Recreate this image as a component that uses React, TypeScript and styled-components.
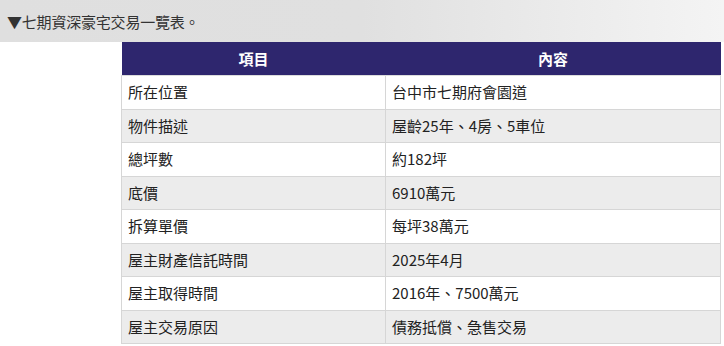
import React from "react"
import styled, { createGlobalStyle } from "styled-components"

const rows: Array<[string, string]> = [
  ["所在位置", "台中市七期府會園道"],
  ["物件描述", "屋齡25年、4房、5車位"],
  ["總坪數", "約182坪"],
  ["底價", "6910萬元"],
  ["拆算單價", "每坪38萬元"],
  ["屋主財產信託時間", "2025年4月"],
  ["屋主取得時間", "2016年、7500萬元"],
  ["屋主交易原因", "債務抵償、急售交易"],
]

const GlobalStyle = createGlobalStyle`
  body {
    margin: 0;
    background: #fff;
    font-family: "Noto Sans CJK TC", "Noto Sans", sans-serif;
    color: #222;
  }
`

const TitleBar = styled.div`
  height: 42px;
  display: flex;
  align-items: center;
  padding-left: 7px;
  background: linear-gradient(to right, #dfdfdf 0%, #e0e0e0 50%, #f4f4f4 100%);
  font-size: 15px;
  color: #333;
  letter-spacing: -0.2px;
`

const Table = styled.table`
  margin-left: 121px;
  width: 600px;
  border-collapse: collapse;
  table-layout: fixed;
  font-size: 15px;
`

const HeadCell = styled.th<{ $first?: boolean }>`
  width: ${(p) => (p.$first ? "264px" : "auto")};
  height: 33px;
  padding: 0;
  background: #2e266e;
  color: #fff;
  font-weight: 700;
  text-align: center;
  border-bottom: 1px solid #dcdcdc;
`

const Row = styled.tr<{ $alt: boolean }>`
  background: ${(p) => (p.$alt ? "#ececec" : "#fff")};
`

const Cell = styled.td`
  padding: 5px 6px;
  line-height: 22.5px;
  border: 1px solid #d6d6d6;
  color: #222;
`

const App: React.FC = () => {
  return (
    <>
      <GlobalStyle />
      <TitleBar>▼七期資深豪宅交易一覽表。</TitleBar>
      <Table>
        <thead>
          <tr>
            <HeadCell $first>項目</HeadCell>
            <HeadCell>內容</HeadCell>
          </tr>
        </thead>
        <tbody>
          {rows.map(([label, value], i) => (
            <Row key={label} $alt={i % 2 === 1}>
              <Cell>{label}</Cell>
              <Cell>{value}</Cell>
            </Row>
          ))}
        </tbody>
      </Table>
    </>
  )
}

export default App
